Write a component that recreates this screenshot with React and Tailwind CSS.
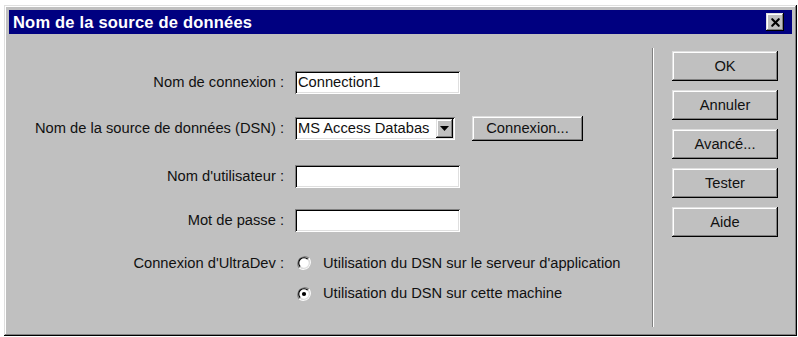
import { X } from 'lucide-react';

const raised =
  'bg-[#c0c0c0] shadow-[inset_-1px_-1px_#000,inset_1px_1px_#dfdfdf,inset_-2px_-2px_#808080,inset_2px_2px_#fff]';
const sunken =
  'bg-white shadow-[inset_1px_1px_#808080,inset_-1px_-1px_#fff,inset_2px_2px_#000,inset_-2px_-2px_#dfdfdf]';

function Field({ value = '' }) {
  return (
    <div className={`w-[165px] h-[23px] flex items-center px-[3px] ${sunken}`}>
      <span className="leading-none">{value}</span>
    </div>
  );
}

function Radio({ checked }) {
  return (
    <svg width="14" height="14" viewBox="0 0 12 12" className="shrink-0">
      <path d="M10.2 1.8 A6 6 0 0 0 1.8 10.2" fill="none" stroke="#808080" strokeWidth="1" />
      <path d="M1.8 10.2 A6 6 0 0 0 10.2 1.8" fill="none" stroke="#fff" strokeWidth="1" />
      <circle cx="6" cy="6" r="4.5" fill="#fff" />
      <path d="M9.2 2.8 A4.5 4.5 0 0 0 2.8 9.2" fill="none" stroke="#000" strokeWidth="1" />
      <path d="M2.8 9.2 A4.5 4.5 0 0 0 9.2 2.8" fill="none" stroke="#dfdfdf" strokeWidth="1" />
      {checked && <circle cx="6" cy="6" r="1.8" fill="#000" />}
    </svg>
  );
}

function Row({ label, className = '', children }) {
  return (
    <div className={`flex items-center h-[23px] ${className}`}>
      <div className="w-[277px] text-right pr-[2px] whitespace-nowrap">{label}</div>
      <div className="ml-[9px] flex items-center">{children}</div>
    </div>
  );
}

const sideButtons = ['OK', 'Annuler', 'Avancé...', 'Tester', 'Aide'];

export default function App() {
  return (
    <div className="w-[798px] h-[337px] bg-white pt-[5px] pl-[4px] font-['Liberation_Sans',Arial,sans-serif] text-[14.7px] text-[#111]">
      <div className={`w-[793px] h-[331px] p-[5px] flex flex-col ${raised}`}>
        {/* Title bar */}
        <div className="h-[24px] bg-[#000080] flex items-center justify-between pl-[4px] pr-[8px]">
          <span className="text-white font-bold text-[16.5px] tracking-[0.2px]">Nom de la source de données</span>
          <button className={`w-[18px] h-[18px] flex items-center justify-center ${raised}`}>
            <X className="w-[13px] h-[13px] text-black" strokeWidth={4} />
          </button>
        </div>

        {/* Body */}
        <div className="flex-1 flex">
          <div className="w-[643px] flex flex-col pt-[37px]">
            <Row label="Nom de connexion :">
              <Field value="Connection1" />
            </Row>
            <Row label="Nom de la source de données (DSN) :" className="mt-[23px]">
              <div className={`w-[160px] h-[23px] flex items-center pl-[3px] pr-[2px] ${sunken}`}>
                <span className="flex-1 overflow-hidden whitespace-nowrap leading-none">MS Access Databas</span>
                <div className={`w-[17px] h-[19px] shrink-0 flex items-center justify-center ${raised}`}>
                  <svg width="9" height="5" viewBox="0 0 9 5">
                    <path d="M0 0h9L4.5 5z" fill="#000" />
                  </svg>
                </div>
              </div>
              <button className={`ml-[17px] w-[111px] h-[25px] flex items-center justify-center ${raised}`}>
                Connexion...
              </button>
            </Row>
            <Row label="Nom d'utilisateur :" className="mt-[25px]">
              <Field />
            </Row>
            <Row label="Mot de passe :" className="mt-[21px]">
              <Field />
            </Row>
            <Row label="Connexion d'UltraDev :" className="mt-[20px]">
              <div className="flex items-center ml-[2px] gap-[12px]">
                <Radio />
                <span className="whitespace-nowrap">Utilisation du DSN sur le serveur d'application</span>
              </div>
            </Row>
            <div className="flex items-center h-[23px] mt-[7px] pl-[288px] gap-[12px]">
              <Radio checked />
              <span className="whitespace-nowrap">Utilisation du DSN sur cette machine</span>
            </div>
          </div>

          {/* Separator */}
          <div className="w-[2px] mt-[14px] mb-[4px] border-l border-[#808080] border-r border-r-white" />

          {/* Buttons */}
          <div className="ml-[18px] pt-[17px] flex flex-col gap-[9px]">
            {sideButtons.map((b) => (
              <button key={b} className={`w-[106px] h-[30px] flex items-center justify-center ${raised}`}>
                {b}
              </button>
            ))}
          </div>
        </div>
      </div>
    </div>
  );
}
